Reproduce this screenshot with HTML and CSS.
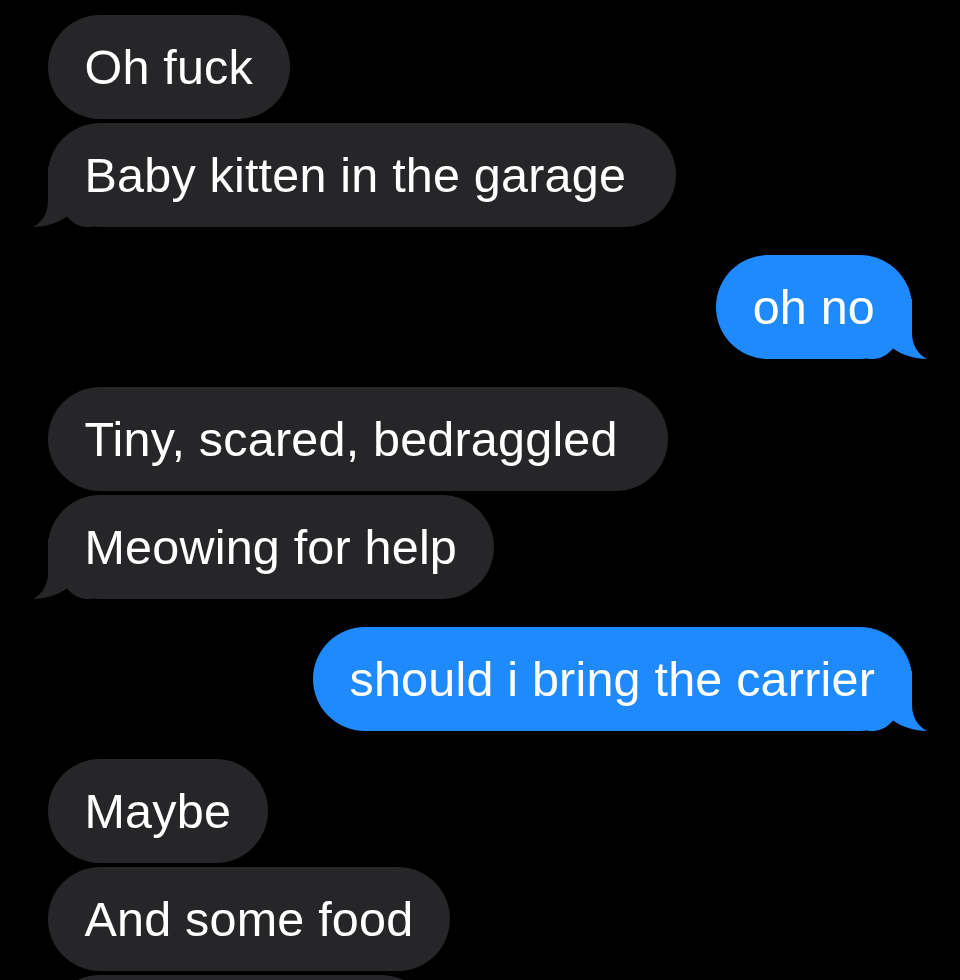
FILE: index.html
```html
<!DOCTYPE html>
<html lang="en">
<head>
<meta charset="utf-8">
<title>Messages</title>
<link rel="stylesheet" href="styles.css">
</head>
<body>
<main class="thread">
  <section class="group received">
    <div class="row"><div class="bubble">Oh fuck</div></div>
    <div class="row"><div class="bubble bubble-roomy">Baby kitten in the garage<svg class="tail" viewBox="0 0 60 60" width="60" height="60" aria-hidden="true"><path d="M16 0 L16 34 C16 47 9 56 1 60 C12 60 26 56 35 49.5 C40 55 45 59 54 60 L60 60 L60 0 Z"/></svg></div></div>
  </section>
  <section class="group sent">
    <div class="row"><div class="bubble">oh no<svg class="tail" viewBox="0 0 60 60" width="60" height="60" aria-hidden="true"><path d="M16 0 L16 34 C16 47 9 56 1 60 C12 60 26 56 35 49.5 C40 55 45 59 54 60 L60 60 L60 0 Z"/></svg></div></div>
  </section>
  <section class="group received">
    <div class="row"><div class="bubble bubble-roomy">Tiny, scared, bedraggled</div></div>
    <div class="row"><div class="bubble">Meowing for help<svg class="tail" viewBox="0 0 60 60" width="60" height="60" aria-hidden="true"><path d="M16 0 L16 34 C16 47 9 56 1 60 C12 60 26 56 35 49.5 C40 55 45 59 54 60 L60 60 L60 0 Z"/></svg></div></div>
  </section>
  <section class="group sent">
    <div class="row"><div class="bubble">should i bring the carrier<svg class="tail" viewBox="0 0 60 60" width="60" height="60" aria-hidden="true"><path d="M16 0 L16 34 C16 47 9 56 1 60 C12 60 26 56 35 49.5 C40 55 45 59 54 60 L60 60 L60 0 Z"/></svg></div></div>
  </section>
  <section class="group received">
    <div class="row"><div class="bubble">Maybe</div></div>
    <div class="row"><div class="bubble">And some food</div></div>
    <div class="row"><div class="bubble bubble-partial"></div></div>
  </section>
</main>
</body>
</html>
```

FILE: styles.css
```css
html {
  overflow: hidden;
  background: #000;
}
body {
  margin: 0;
  background: #000;
  font-family: "Liberation Sans", Arial, sans-serif;
  color: #fff;
}
.thread {
  display: flex;
  flex-direction: column;
  gap: 28px;
  padding: 15px 48px 0;
}
.group {
  display: flex;
  flex-direction: column;
  gap: 4px;
}
.row {
  display: flex;
}
.sent .row {
  justify-content: flex-end;
}
.bubble {
  position: relative;
  isolation: isolate;
  height: 104px;
  line-height: 104px;
  padding: 0 37px 0 36.5px;
  border-radius: 52px;
  font-size: 48.5px;
  letter-spacing: 0.2px;
  white-space: nowrap;
  background: #262629;
}
.bubble-roomy {
  padding-right: 50px;
}
.sent .bubble {
  background: #1f8afe;
  padding: 0 37px 0 37px;
}
.bubble-partial {
  width: 311px;
}
.tail {
  position: absolute;
  z-index: -1;
  bottom: 0;
  left: -16px;
  display: block;
}
.tail path {
  fill: #262629;
}
.sent .tail {
  left: auto;
  right: -16px;
  transform: scaleX(-1);
}
.sent .tail path {
  fill: #1f8afe;
}
```
